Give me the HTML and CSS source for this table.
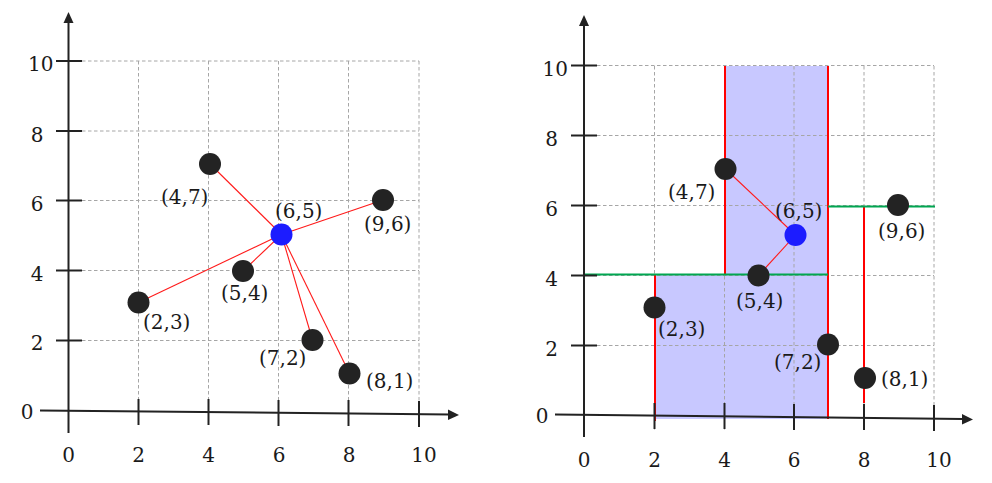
FILE: index.html
```html
<!DOCTYPE html>
<html>
<head>
<meta charset="utf-8">
<link rel="stylesheet" href="styles.css">
</head>
<body>
<main class="figure">
  <svg class="panel" width="496" height="483" viewBox="0 0 496 483" xmlns="http://www.w3.org/2000/svg">
    <g class="grid">
      <line x1="82" y1="61" x2="419" y2="61"/>
      <line x1="82" y1="131" x2="419" y2="131"/>
      <line x1="82" y1="200.5" x2="419" y2="200.5"/>
      <line x1="82" y1="270.5" x2="419" y2="270.5"/>
      <line x1="82" y1="340.5" x2="419" y2="340.5"/>
      <line x1="138.5" y1="61" x2="138.5" y2="425"/>
      <line x1="208.5" y1="61" x2="208.5" y2="425"/>
      <line x1="278.5" y1="61" x2="278.5" y2="425"/>
      <line x1="348.5" y1="61" x2="348.5" y2="425"/>
      <line x1="419" y1="61" x2="419" y2="425"/>
    </g>
    <g class="axis">
      <line x1="68.5" y1="433" x2="68.5" y2="22"/>
      <line x1="40" y1="410.5" x2="450" y2="414.5"/>
      <line x1="56" y1="61" x2="82" y2="61"/>
      <line x1="56" y1="131" x2="82" y2="131"/>
      <line x1="56" y1="200.5" x2="82" y2="200.5"/>
      <line x1="56" y1="270.5" x2="82" y2="270.5"/>
      <line x1="56" y1="340.5" x2="82" y2="340.5"/>
      <line x1="138.5" y1="399" x2="138.5" y2="425"/>
      <line x1="208.5" y1="399" x2="208.5" y2="425"/>
      <line x1="278.5" y1="400" x2="278.5" y2="426"/>
      <line x1="348.5" y1="400" x2="348.5" y2="426"/>
      <line x1="419" y1="401" x2="419" y2="427"/>
    </g>
    <polygon class="arrow" points="68.5,12 63.5,23 73.5,23"/>
    <polygon class="arrow" points="459,415 448,409.5 448,420"/>
    <g class="link">
      <line x1="281.5" y1="234.5" x2="210" y2="164"/>
      <line x1="281.5" y1="234.5" x2="383" y2="200"/>
      <line x1="281.5" y1="234.5" x2="243" y2="271"/>
      <line x1="281.5" y1="234.5" x2="138.5" y2="302.5"/>
      <line x1="281.5" y1="234.5" x2="312.5" y2="340"/>
      <line x1="281.5" y1="234.5" x2="349.5" y2="373.5"/>
    </g>
    <g class="dot">
      <circle cx="210" cy="164" r="11"/>
      <circle cx="383" cy="200" r="11"/>
      <circle cx="243" cy="271" r="11"/>
      <circle cx="138.5" cy="302.5" r="11"/>
      <circle cx="312.5" cy="340" r="11"/>
      <circle cx="349.5" cy="373.5" r="11"/>
    </g>
    <circle class="query" cx="281.5" cy="234.5" r="11"/>
    <g class="lbl">
      <text x="161" y="203.5">(4,7)</text>
      <text x="275" y="217.5">(6,5)</text>
      <text x="364" y="230.5">(9,6)</text>
      <text x="221" y="299.5">(5,4)</text>
      <text x="143" y="328.5">(2,3)</text>
      <text x="259" y="364.5">(7,2)</text>
      <text x="366" y="387.5">(8,1)</text>
    </g>
    <g class="lbl end">
      <text x="53.5" y="71">10</text>
      <text x="43.5" y="141.5">8</text>
      <text x="43.5" y="210.5">6</text>
      <text x="43.5" y="280.5">4</text>
      <text x="43.5" y="349.5">2</text>
      <text x="33.5" y="419">0</text>
    </g>
    <g class="lbl mid">
      <text x="68.5" y="461.5">0</text>
      <text x="138.5" y="461.5">2</text>
      <text x="208.5" y="461.5">4</text>
      <text x="279" y="461.5">6</text>
      <text x="349" y="461.5">8</text>
      <text x="424" y="461.5">10</text>
    </g>
  </svg>

  <svg class="panel" width="496" height="483" viewBox="496 0 496 483" xmlns="http://www.w3.org/2000/svg">
    <rect class="fill" x="725" y="66" width="103" height="209"/>
    <rect class="fill" x="655" y="275" width="173" height="144"/>
    <g class="grid">
      <line x1="597" y1="65.5" x2="934" y2="65.5"/>
      <line x1="597" y1="135.5" x2="934" y2="135.5"/>
      <line x1="597" y1="205.5" x2="934" y2="205.5"/>
      <line x1="597" y1="275.5" x2="934" y2="275.5"/>
      <line x1="597" y1="345.5" x2="934" y2="345.5"/>
      <line x1="654.5" y1="66" x2="654.5" y2="430"/>
      <line x1="724.5" y1="66" x2="724.5" y2="430"/>
      <line x1="794" y1="66" x2="794" y2="430"/>
      <line x1="864" y1="66" x2="864" y2="430"/>
      <line x1="934" y1="66" x2="934" y2="430"/>
    </g>
    <g class="split-red">
      <line x1="725" y1="66" x2="725" y2="275"/>
      <line x1="828" y1="66" x2="828" y2="419"/>
      <line x1="655" y1="275" x2="655" y2="421"/>
      <line x1="864" y1="206.5" x2="864" y2="403"/>
    </g>
    <g class="split-green">
      <line x1="584" y1="274.5" x2="828" y2="274.5"/>
      <line x1="828" y1="206.5" x2="935" y2="206.5"/>
    </g>
    <g class="axis">
      <line x1="584" y1="437" x2="584" y2="26"/>
      <line x1="555" y1="414.5" x2="963" y2="419"/>
      <line x1="571" y1="65.5" x2="597" y2="65.5"/>
      <line x1="571" y1="135.5" x2="597" y2="135.5"/>
      <line x1="571" y1="205.5" x2="597" y2="205.5"/>
      <line x1="571" y1="275.5" x2="597" y2="275.5"/>
      <line x1="571" y1="345.5" x2="597" y2="345.5"/>
      <line x1="654.5" y1="403" x2="654.5" y2="429"/>
      <line x1="724.5" y1="403" x2="724.5" y2="429"/>
      <line x1="794" y1="404" x2="794" y2="430"/>
      <line x1="864" y1="404" x2="864" y2="430"/>
      <line x1="934" y1="405" x2="934" y2="431"/>
    </g>
    <polygon class="arrow" points="584,15 579,26 589,26"/>
    <polygon class="arrow" points="973,419.5 962,414 962,424.5"/>
    <g class="link">
      <line x1="795.5" y1="235" x2="725.5" y2="169"/>
      <line x1="795.5" y1="235" x2="758.5" y2="275.5"/>
    </g>
    <g class="dot">
      <circle cx="725.5" cy="169" r="11"/>
      <circle cx="898" cy="205" r="11"/>
      <circle cx="758.5" cy="275.5" r="11"/>
      <circle cx="654.5" cy="307.5" r="11"/>
      <circle cx="828" cy="344.5" r="11"/>
      <circle cx="865" cy="378" r="11"/>
    </g>
    <circle class="query" cx="795.5" cy="235" r="11"/>
    <g class="lbl">
      <text x="668" y="199">(4,7)</text>
      <text x="775" y="217.5">(6,5)</text>
      <text x="878" y="237.5">(9,6)</text>
      <text x="736" y="307.5">(5,4)</text>
      <text x="658" y="335.5">(2,3)</text>
      <text x="774" y="368.5">(7,2)</text>
      <text x="881" y="385.5">(8,1)</text>
    </g>
    <g class="lbl end">
      <text x="568" y="76">10</text>
      <text x="558" y="146">8</text>
      <text x="558" y="216">6</text>
      <text x="558" y="286">4</text>
      <text x="558" y="356">2</text>
      <text x="548.5" y="423">0</text>
    </g>
    <g class="lbl mid">
      <text x="584" y="466.5">0</text>
      <text x="654.5" y="466.5">2</text>
      <text x="724.5" y="466.5">4</text>
      <text x="794" y="466.5">6</text>
      <text x="864" y="466.5">8</text>
      <text x="939" y="466.5">10</text>
    </g>
  </svg>
</main>
</body>
</html>
```
FILE: styles.css
```css
html, body {
  margin: 0;
  padding: 0;
  background: #ffffff;
  font-family: "DejaVu Serif", serif;
}
.figure {
  display: flex;
  flex-direction: row;
  width: 992px;
  height: 483px;
  overflow: hidden;
}
.panel {
  display: block;
  flex: 0 0 496px;
  font-family: "DejaVu Serif", serif;
}
.grid line {
  stroke: #a6a6a6;
  stroke-width: 1;
  stroke-dasharray: 3.5 2.5;
}
.axis line {
  stroke: #222222;
  stroke-width: 2;
}
.arrow {
  fill: #222222;
}
.link line {
  stroke: #ff1a1a;
  stroke-width: 1.1;
}
.dot circle {
  fill: #232323;
}
.query {
  fill: #1c1cff;
}
.fill {
  fill: #c8c8ff;
}
.split-red line {
  stroke: #ff0000;
  stroke-width: 2;
}
.split-green line {
  stroke: #00a651;
  stroke-width: 2.2;
}
.lbl text {
  font-family: "DejaVu Serif", serif;
  font-size: 20px;
  fill: #1a1a1a;
}
.lbl.end text {
  text-anchor: end;
}
.lbl.mid text {
  text-anchor: middle;
}
```
